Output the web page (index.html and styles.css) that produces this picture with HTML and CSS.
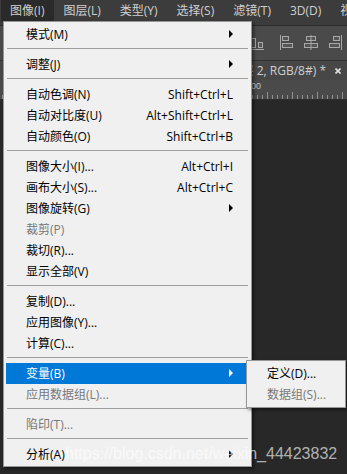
FILE: index.html
```html
<!DOCTYPE html>
<html lang="zh-CN">
<head>
  <meta charset="UTF-8">
  <meta name="viewport" content="width=device-width, initial-scale=1.0">
  <title>图像菜单</title>
  <link rel="stylesheet" href="styles.css">
</head>
<body>
  <div class="app">
    <div class="menubar">
      <span class="mb-item active">图像(I)</span>
      <span class="mb-item">图层(L)</span>
      <span class="mb-item">类型(Y)</span>
      <span class="mb-item">选择(S)</span>
      <span class="mb-item">滤镜(T)</span>
      <span class="mb-item">3D(D)</span>
      <span class="mb-item">视图(V)</span>
    </div>

    <div class="options">
      <!-- align bottom edges -->
      <svg class="align-icon first" width="14" height="15" viewBox="0 0 14 15">
        <rect x="1.5" y="2.5" width="4" height="9" />
        <rect x="8.5" y="6.5" width="4" height="5" />
        <line x1="0" y1="13.5" x2="14" y2="13.5" />
      </svg>
      <!-- align left edges -->
      <svg class="align-icon" width="14" height="15" viewBox="0 0 14 15">
        <line x1="0.5" y1="0" x2="0.5" y2="15" />
        <rect x="2.5" y="1.5" width="6" height="4" />
        <rect x="2.5" y="8.5" width="10" height="4" />
      </svg>
      <!-- align horizontal centers -->
      <svg class="align-icon" width="14" height="15" viewBox="0 0 14 15">
        <rect x="2.5" y="1.5" width="9" height="4" />
        <rect x="0.5" y="8.5" width="13" height="4" />
        <line x1="7" y1="0" x2="7" y2="15" />
      </svg>
      <!-- align right edges -->
      <svg class="align-icon" width="14" height="15" viewBox="0 0 14 15">
        <line x1="13.5" y1="0" x2="13.5" y2="15" />
        <rect x="5.5" y="1.5" width="6" height="4" />
        <rect x="1.5" y="8.5" width="10" height="4" />
      </svg>
    </div>

    <div class="tabs">
      <div class="tab">
        <span class="tab-title">未标题-1 @ 100% (图层 2, RGB/8#) *</span>
        <svg class="tab-close" width="6" height="6" viewBox="0 0 6 6">
          <path d="M0.5 0.5 L5.5 5.5 M5.5 0.5 L0.5 5.5" />
        </svg>
      </div>
    </div>

    <div class="ruler">
      <span class="ruler-cell">0</span>
      <span class="ruler-cell">50</span>
      <span class="ruler-cell">100</span>
      <span class="ruler-cell">150</span>
      <span class="ruler-cell">200</span>
    </div>

    <div class="canvas"></div>
  </div>

  <div class="menu">
    <div class="item sub"><span class="label">模式(M)</span></div>
    <div class="sep"></div>
    <div class="item sub"><span class="label">调整(J)</span></div>
    <div class="sep"></div>
    <div class="item"><span class="label">自动色调(N)</span><span class="key">Shift+Ctrl+L</span></div>
    <div class="item"><span class="label">自动对比度(U)</span><span class="key">Alt+Shift+Ctrl+L</span></div>
    <div class="item"><span class="label">自动颜色(O)</span><span class="key">Shift+Ctrl+B</span></div>
    <div class="sep"></div>
    <div class="item"><span class="label">图像大小(I)...</span><span class="key">Alt+Ctrl+I</span></div>
    <div class="item"><span class="label">画布大小(S)...</span><span class="key">Alt+Ctrl+C</span></div>
    <div class="item sub"><span class="label">图像旋转(G)</span></div>
    <div class="item disabled"><span class="label">裁剪(P)</span></div>
    <div class="item"><span class="label">裁切(R)...</span></div>
    <div class="item"><span class="label">显示全部(V)</span></div>
    <div class="sep"></div>
    <div class="item"><span class="label">复制(D)...</span></div>
    <div class="item"><span class="label">应用图像(Y)...</span></div>
    <div class="item"><span class="label">计算(C)...</span></div>
    <div class="sep"></div>
    <div class="item sub selected"><span class="label">变量(B)</span></div>
    <div class="item disabled"><span class="label">应用数据组(L)...</span></div>
    <div class="sep"></div>
    <div class="item disabled"><span class="label">陷印(T)...</span></div>
    <div class="sep"></div>
    <div class="item sub"><span class="label">分析(A)</span></div>
  </div>

  <div class="submenu">
    <div class="item"><span class="label">定义(D)...</span></div>
    <div class="item disabled"><span class="label">数据组(S)...</span></div>
  </div>

  <div class="watermark">https://blog.csdn.net/weixin_44423832</div>
</body>
</html>
```

FILE: styles.css
```css
html, body {
  margin: 0;
  padding: 0;
  height: 100%;
}
body {
  background: #282828;
  font-family: "Open Sans", "Noto Sans CJK SC", sans-serif;
  font-size: 12px;
  overflow: hidden;
  position: relative;
}

/* photoshop window behind the menu */
.app {
  display: flex;
  flex-direction: column;
  height: 100%;
}
.menubar {
  display: flex;
  height: 26px;
  box-sizing: border-box;
  padding-left: 0.5px;
  background: #3c3c3c;
  border-bottom: 1px solid #2c2c2c;
  color: #d0d0d0;
  overflow: hidden;
}
.mb-item {
  padding: 0 9.5px;
  height: 22px;
  line-height: 22px;
  white-space: nowrap;
}
.mb-item.active {
  background: #2a2a2a;
}
.options {
  display: flex;
  justify-content: flex-end;
  align-items: flex-start;
  gap: 10px;
  height: 34px;
  box-sizing: border-box;
  padding: 9px 5px 0 0;
  background: #4a4a4a;
}
.align-icon {
  stroke: #a8a8a8;
  fill: #555555;
  stroke-width: 1;
}
.align-icon.first {
  margin-right: 6px;
  margin-top: 1px;
}
.tabs {
  display: flex;
  justify-content: flex-end;
  height: 20px;
  box-sizing: border-box;
  background: #474747;
  border-top: 1px solid #333333;
  overflow: hidden;
}
.tab {
  display: flex;
  align-items: center;
  gap: 9px;
  padding-right: 6px;
  color: #cfcfcf;
  white-space: nowrap;
  line-height: 19px;
}
.tab-close {
  stroke: #e0e0e0;
  stroke-width: 1.6;
}
.ruler {
  display: flex;
  height: 20px;
  box-sizing: border-box;
  padding-left: 42px;
  background:
    repeating-linear-gradient(90deg, #909090 0 1px, transparent 1px 5px) 2px 100% / 100% 4px no-repeat,
    repeating-linear-gradient(90deg, #909090 0 1px, transparent 1px 25px) 17px 100% / 100% 7px no-repeat,
    #4a4a4a;
  border-bottom: 1px solid #2e2e2e;
  overflow: hidden;
}
.ruler-cell {
  flex: 0 0 50px;
  box-sizing: border-box;
  border-left: 1px solid #9a9a9a;
  padding: 1px 0 0 3px;
  font-family: "Liberation Sans", sans-serif;
  font-size: 9px;
  line-height: 10px;
  color: #c4c4c4;
}
.canvas {
  flex: 1;
  background: #282828;
}

/* drop-down menu */
.menu, .submenu {
  position: absolute;
  box-sizing: border-box;
  background: #f0f0f0;
  border: 1px solid #979797;
  box-shadow: 2px 2px 3px rgba(0,0,0,0.45);
  color: #000;
}
.menu {
  left: 3px;
  top: 21px;
  width: 249px;
  padding: 2px 2px 1px 2px;
}
.submenu {
  left: 246px;
  top: 360px;
  width: 100px;
  padding: 2px;
}
.item {
  display: grid;
  grid-template-columns: 1fr auto 16px;
  align-items: center;
  height: 21px;
  padding-left: 20px;
  line-height: 21px;
  white-space: nowrap;
}
.item::after {
  content: "";
}
.item.sub::after {
  width: 0;
  height: 0;
  margin-left: 5px;
  margin-top: -2px;
  border-left: 4px solid #000;
  border-top: 4px solid transparent;
  border-bottom: 4px solid transparent;
}
.item.disabled {
  color: #787878;
}
.item.selected {
  background: #0078d7;
  color: #fff;
}
.item.selected::after {
  border-left-color: #fff;
}
.submenu .item {
  padding-left: 18px;
}
.sep {
  height: 1px;
  margin: 3px 1px 5px 1px;
  background: #a0a0a0;
}

.watermark {
  position: absolute;
  left: 65px;
  top: 446px;
  font-family: "Liberation Sans", sans-serif;
  font-size: 16px;
  line-height: 16px;
  color: rgba(255,255,255,0.65);
  white-space: nowrap;
}
```
